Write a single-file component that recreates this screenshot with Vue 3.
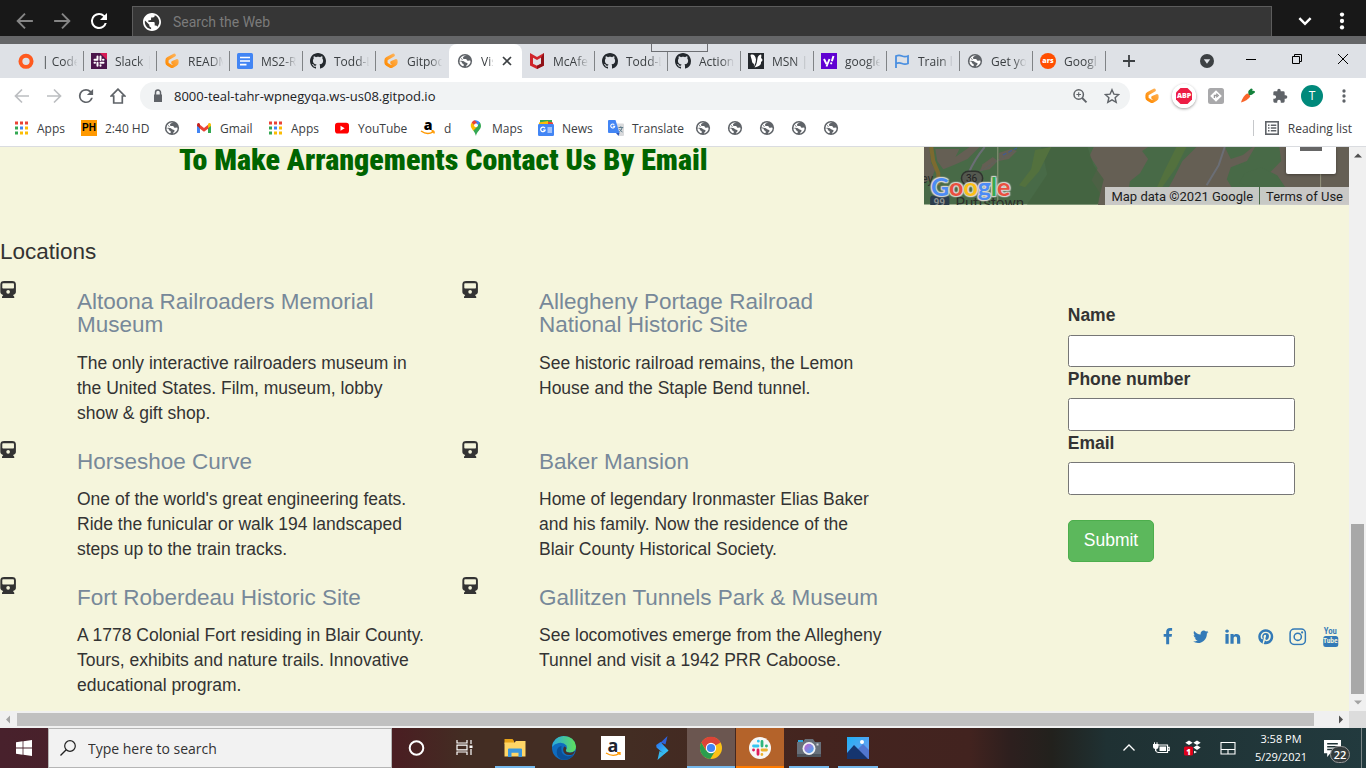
<script setup>
import { h } from 'vue'

const letters = {
  ars: ['ars'],
  ph: ['PH'],
  amazon: ['a'],
  abp: ['ABP'],
  'amazon-tile': ['a'],
  'youtube-old': ['You', 'Tube'],
  dropbox: ['1'],
}

const Glyph = (props) =>
  h('span', { class: ['glyph', 'glyph-' + props.name] }, [
    h('svg', { 'aria-hidden': 'true' }, [h('use', { href: '#' + props.name })]),
    ...(letters[props.name] || []).map((t) => h('b', t)),
  ])
Glyph.props = ['name']

const tabs = [
  { icon: 'codeo', label: '| Code' },
  { icon: 'slack', label: 'Slack |' },
  { icon: 'gitpod', label: 'READM' },
  { icon: 'docs', label: 'MS2-R' },
  { icon: 'github', label: 'Todd-L' },
  { icon: 'gitpod', label: 'Gitpod' },
  { icon: 'globe', label: 'Vis', active: true },
  { icon: 'mcafee', label: 'McAfe' },
  { icon: 'github', label: 'Todd-L' },
  { icon: 'github', label: 'Action' },
  { icon: 'msn', label: 'MSN |' },
  { icon: 'yahoo', label: 'google' },
  { icon: 'flag', label: 'Train lo' },
  { icon: 'globe', label: 'Get yo' },
  { icon: 'ars', label: 'Googl' },
]

const bookmarks = [
  { icon: 'apps', label: 'Apps', width: 68 },
  { icon: 'ph', label: '2:40 HD', width: 83 },
  { icon: 'globe', label: '', width: 32 },
  { icon: 'gmail', label: 'Gmail', width: 71 },
  { icon: 'apps', label: 'Apps', width: 67 },
  { icon: 'youtube', label: 'YouTube', width: 86 },
  { icon: 'amazon', label: 'd', width: 48 },
  { icon: 'maps', label: 'Maps', width: 70 },
  { icon: 'news', label: 'News', width: 70 },
  { icon: 'translate', label: 'Translate', width: 87 },
  { icon: 'globe', label: '', width: 32 },
  { icon: 'globe', label: '', width: 32 },
  { icon: 'globe', label: '', width: 32 },
  { icon: 'globe', label: '', width: 32 },
  { icon: 'globe', label: '', width: 32 },
]

const extensions = ['gitpod', 'abp', 'tag', 'carrot', 'puzzle']

const locations = [
  { name: 'Altoona Railroaders Memorial Museum', text: 'The only interactive railroaders museum in the United States. Film, museum, lobby show & gift shop.' },
  { name: 'Allegheny Portage Railroad National Historic Site', text: 'See historic railroad remains, the Lemon House and the Staple Bend tunnel.' },
  { name: 'Horseshoe Curve', text: "One of the world's great engineering feats. Ride the funicular or walk 194 landscaped steps up to the train tracks." },
  { name: 'Baker Mansion', text: 'Home of legendary Ironmaster Elias Baker and his family. Now the residence of the Blair County Historical Society.' },
  { name: 'Fort Roberdeau Historic Site', text: 'A 1778 Colonial Fort residing in Blair County. Tours, exhibits and nature trails. Innovative educational program.' },
  { name: 'Gallitzen Tunnels Park & Museum', text: 'See locomotives emerge from the Allegheny Tunnel and visit a 1942 PRR Caboose.' },
]

const social = ['facebook', 'twitter', 'linkedin', 'pinterest', 'instagram', 'youtube-old']

const pinned = [
  { icon: 'cortana' },
  { icon: 'taskview' },
  { icon: 'explorer', state: 'open' },
  { icon: 'edge' },
  { icon: 'amazon-tile' },
  { icon: 'stream' },
  { icon: 'chrome', state: 'current' },
  { icon: 'slack-round', state: 'alert' },
  { icon: 'camera', state: 'open' },
  { icon: 'photos', state: 'open' },
]
</script>

<template>
  <svg class="sprite" aria-hidden="true">
    <defs>
      <linearGradient id="g-pod" x1="1" y1="0" x2="0" y2="1"><stop offset="0" stop-color="#ffb45b" /><stop offset="1" stop-color="#ff8a00" /></linearGradient>
      <linearGradient id="g-edge" x1="0" y1="0" x2="1" y2="0"><stop offset="0" stop-color="#2aa8e0" /><stop offset="1" stop-color="#5fe05a" /></linearGradient>
      <linearGradient id="g-stream" x1="0" y1="0" x2="1" y2="1"><stop offset="0" stop-color="#2a6df0" /><stop offset="1" stop-color="#37d6f5" /></linearGradient>
      <linearGradient id="g-photo" x1="0" y1="0" x2="1" y2="1"><stop offset="0" stop-color="#20b0f5" /><stop offset="1" stop-color="#7a9cf0" /></linearGradient>
      <linearGradient id="g-lens" x1="0" y1="0" x2="1" y2="1"><stop offset="0" stop-color="#c75fd0" /><stop offset="1" stop-color="#3fb0f0" /></linearGradient>
    </defs>
    <symbol id="arrow-left" viewBox="0 0 16 16"><path d="M15 8H1.500M8 1.500L1.500 8 8 14.500" fill="none" stroke="currentColor" stroke-width="1.700" /></symbol>
    <symbol id="arrow-right" viewBox="0 0 16 16"><path d="M1 8h13.500M8 1.500L14.500 8 8 14.500" fill="none" stroke="currentColor" stroke-width="1.700" /></symbol>
    <symbol id="reload" viewBox="3 3 18 18"><path fill="currentColor" d="M17.65 6.350A7.960 7.960 0 0 0 12 4a8 8 0 1 0 7.730 10h-2.080A6 6 0 1 1 12 6c1.660 0 3.140.69 4.220 1.780L13 11h7V4z" /></symbol>
    <symbol id="home" viewBox="0 0 16 16"><path d="M8 1.200L1.300 8h2.400v7h8.600V8h2.400z" fill="none" stroke="currentColor" stroke-width="1.700" /></symbol>
    <symbol id="world" viewBox="2 2 20 20"><path fill="currentColor" d="M12 2C6.480 2 2 6.480 2 12s4.480 10 10 10 10-4.480 10-10S17.520 2 12 2zm-1 17.930c-3.950-.49-7-3.850-7-7.930 0-.62.08-1.210.21-1.790L9 15v1c0 1.100.9 2 2 2zm6.900-2.540A2 2 0 0 0 16 16h-1v-3c0-.55-.45-1-1-1H8v-2h2c.55 0 1-.45 1-1V7h2a2 2 0 0 0 2-2v-.41A8 8 0 0 1 17.900 17.390z" /></symbol>
    <symbol id="globe" viewBox="0 0 16 16"><circle cx="8" cy="8" r="7.100" fill="#5f6368" /><g fill="#fff"><path d="M9.600 2.600C8 3 6.300 3.500 6 4.700c-.2 1.100.9 1.500 2 1.300 1-.2 1.700.2 1.800 1 .2 1 1.500.7 2.400.4l1.300.3q.3 1.700-.8 3.400-1.300 1.900-3.400 2.300c-.4-.6.2-1.200.8-1.700.7-.6.6-1.400-.1-1.800-.9-.5-1.800-.2-2.300-.9-.4-.6-.9-1-1.800-1.100C4.700 7.800 3.500 7.500 2.500 7.500 2.200 10 3.300 12 5.300 13c.9.300 1.500 0 1.500-.8 0-.9-.6-1.200-1.300-1.600-.8-.5-1-1.100-.5-1.700l-2.500-1Q2.600 5.300 4.500 3.700 6.700 2 9.600 2.600z" /></g><path d="M4 5.500q1 .2 1.500 1.200M10.700 4.500q1 .8 2.300.8" stroke="#5f6368" fill="none" stroke-width=".8" /></symbol>
    <symbol id="lock" viewBox="0 0 16 16"><path d="M4 6.500h8v7.500H4z" fill="#5f6368" /><path d="M5.500 7V4.500a2.500 2.500 0 0 1 5 0V7" fill="none" stroke="#5f6368" stroke-width="1.500" /></symbol>
    <symbol id="zoomin" viewBox="0 0 16 16"><g fill="none" stroke="#5f6368"><circle cx="6.700" cy="6.500" r="4.700" stroke-width="1.500" /><path d="M10.200 10l4.300 4.300" stroke-width="1.900" /><path d="M6.700 4.200v4.600M4.400 6.500H9" stroke-width="1.100" /></g></symbol>
    <symbol id="star" viewBox="0 0 16 16"><path d="M8 1.700l1.900 4.400 4.800.4-3.600 3.200 1.100 4.700L8 11.900l-4.200 2.500 1.100-4.700L1.300 6.500l4.800-.4z" fill="none" stroke="#5f6368" stroke-width="1.400" /></symbol>
    <symbol id="dots" viewBox="0 0 16 16"><circle cx="8" cy="2.300" r="1.900" fill="currentColor" /><circle cx="8" cy="8" r="1.900" fill="currentColor" /><circle cx="8" cy="13.700" r="1.900" fill="currentColor" /></symbol>
    <symbol id="chev-down" viewBox="0 0 16 16"><path d="M3 5.500l5 5 5-5" fill="none" stroke="currentColor" stroke-width="2.200" /></symbol>
    <symbol id="codeo" viewBox="0 0 16 16"><circle cx="8" cy="8.300" r="5.600" fill="none" stroke="#ff5a1f" stroke-width="3.900" /></symbol>
    <symbol id="slack" viewBox="0 0 16 16"><path fill="#4a154b" d="M0 0h16v16H0z" /><path fill="#d81b55" d="M9 0h7v7z" /><g stroke="#fff" stroke-width="2" stroke-linecap="round"><path d="M6.500 3.500v2M3.500 6.800h3M9.500 3.500v3.500M12 6.800h.5M3.500 9.700h.500M6.500 9.700v3M9.500 9.700h3M9.500 12.300v.4" /></g></symbol>
    <symbol id="gitpod" viewBox="0 0 16 16"><path d="M10.300 2.200L4.200 5.500Q3 6.200 3 7.200v2.600q0 1.100 1 1.600l3 1.700q1 .6 2 0l3-1.700q1-.5 1-1.600V7.700L8.800 9.500" fill="none" stroke="url(#g-pod)" stroke-width="3.200" stroke-linecap="round" stroke-linejoin="round" /></symbol>
    <symbol id="docs" viewBox="0 0 16 16"><rect width="16" height="16" rx="1.500" fill="#4285f4" /><path d="M3 4.500h10M3 8h10M3 11.700h6.500" stroke="#fff" stroke-width="1.700" /></symbol>
    <symbol id="github" viewBox="0 0 16 16"><path fill="#24292e" d="M8 0C3.580 0 0 3.580 0 8c0 3.540 2.290 6.530 5.470 7.590.4.07.55-.17.55-.38 0-.19-.01-.82-.01-1.490-2.010.37-2.530-.49-2.690-.94-.09-.23-.48-.94-.82-1.130-.28-.15-.68-.52-.01-.53.63-.01 1.080.58 1.230.82.72 1.210 1.870.87 2.330.66.07-.52.28-.87.51-1.070-1.780-.2-3.640-.89-3.640-3.950 0-.87.31-1.590.82-2.150-.08-.2-.36-1.020.08-2.120 0 0 .67-.21 2.200.82.64-.18 1.320-.27 2-.27.68 0 1.360.09 2 .27 1.530-1.040 2.200-.82 2.200-.82.44 1.100.16 1.920.08 2.120.51.56.82 1.270.82 2.150 0 3.070-1.870 3.750-3.650 3.950.29.25.54.73.54 1.480 0 1.070-.01 1.930-.01 2.200 0 .21.15.46.55.38A8.013 8.013 0 0 0 16 8c0-4.420-3.580-8-8-8z" /></symbol>
    <symbol id="mcafee" viewBox="0 0 16 16"><path d="M1 0l7 4 7-4v12.500L8 16l-7-3.500zM4 4.800v5.900l4 2 4-2V4.800L8 7z" fill="#d0252b" fill-rule="evenodd" /><path d="M15 0v12.500L8 16v-3.300l4-2V4.800z" fill="#8f1218" /></symbol>
    <symbol id="msn" viewBox="0 0 16 16"><path fill="#24282c" d="M0 0h16v16H0z" /><path d="M2.500 2C5 .8 7.500 2 8 6.500L7.600 9.500 6 13.500c-.3-1 .3-1.700-.2-2.700-1-.5-1.500-1-1.800-2.300C3.800 6 2.700 4.500 2.500 2zM13 1.500c1 1.500-.3 2.500.3 3.700 1.500 1 1.700 2.500-.1 3.500-.5.700.2 1.700-.7 2.700-1.500 2-4 2.500-6 3 1.600-2 2.500-5 2.800-8 .2-2.500 1.500-4.700 3.700-4.900z" fill="#fff" /></symbol>
    <symbol id="yahoo" viewBox="0 0 16 16"><path fill="#6001d2" d="M0 0h16v16H0z" /><path d="M3 6l2.500 5M8.500 6l-3 7.500" stroke="#fff" stroke-width="1.900" /><path d="M12.500 3l-1.700 5.300" stroke="#fff" stroke-width="2" /><circle cx="10.200" cy="10.300" r="1.100" fill="#fff" /></symbol>
    <symbol id="flag" viewBox="0 0 16 16"><path d="M2 15V3q3-1.200 6 0t6 0v7.500q-3 1.200-6 0t-6 0" fill="none" stroke="#4a8fe0" stroke-width="1.800" /></symbol>
    <symbol id="ars" viewBox="0 0 16 16"><circle cx="8" cy="8" r="8" fill="#ff4e00" /></symbol>
    <symbol id="apps" viewBox="0 0 16 16"><path fill="#ea4335" d="M2 1.500h3v3H2zM7 1.500h3v3H7zM12 1.500h3v3h-3z" /><path fill="#34a853" d="M2 6.500h3v3H2zM2 11.500h3v3H2z" /><path fill="#4285f4" d="M7 6.500h3v3H7z" /><path fill="#fbbc04" d="M12 6.500h3v3h-3zM7 11.500h3v3H7zM12 11.500h3v3h-3z" /></symbol>
    <symbol id="ph" viewBox="0 0 16 16"><path fill="#ff9900" d="M0 0h16v16H0z" /></symbol>
    <symbol id="gmail" viewBox="0 0 16 16"><path fill="#4285f4" d="M1 4.500v8.500h3V6.500z" /><path fill="#34a853" d="M12 6.500V13h3V4.500z" /><path fill="#ea4335" d="M3 4l5 4 5-4v4l-5 3.800L3 8z" /><path fill="#c5221f" d="M1 4.500q0-1.800 2-1.500l1 1v4L1 6z" /><path fill="#fbbc04" d="M15 4.500q0-1.800-2-1.500l-1 1v4l3-2z" /></symbol>
    <symbol id="youtube" viewBox="0 0 16 16"><rect x="1" y="2.800" width="14" height="10.700" rx="2.800" fill="#f00" /><path d="M6.500 5.700v5l4.200-2.500z" fill="#fff" /></symbol>
    <symbol id="amazon" viewBox="0 0 16 16"><path d="M1 11q6.500 4.500 12 .8M11.500 10.800q3-.6 2.500 2.700" fill="none" stroke="#ff9900" stroke-width="1.500" /></symbol>
    <symbol id="maps" viewBox="0 0 16 16"><path fill="#34a853" d="M13 6c0 4-4.300 5-5 10-.5-2-1.500-4-3-6l6.500-8Q13 3.500 13 6z" /><path fill="#4285f4" d="M6.500.300Q10-.5 12 2.700L8.300 7z" /><path fill="#ea4335" d="M6.500.300L9 2.500 5.500 6 3.600 2.700Q4.800.8 6.500.300z" /><path fill="#fbbc04" d="M3.600 2.700L6.300 5l2.400 2.300-3.500 3.400Q1.300 6 3.600 2.700z" /><circle cx="8" cy="5.300" r="1.900" fill="#fff" /></symbol>
    <symbol id="news" viewBox="0 0 16 16"><path fill="#34a853" d="M2 0h12v5H2z" /><path fill="#ea4335" d="M9 1.500l6 1V6H9z" /><path fill="#fbbc04" d="M1 2.500L10 1v4H1z" /><rect y="4" width="16" height="12" rx="1.200" fill="#4285f4" /><path d="M7 8.300A2.300 2.300 0 1 0 7.200 10H5M9.500 8h4.500M9.500 10H14M9.500 12H14" fill="none" stroke="#fff" stroke-width="1.200" /></symbol>
    <symbol id="translate" viewBox="0 0 16 16"><path fill="#d9dadc" d="M7 3.500h8a1 1 0 0 1 1 1V15a1 1 0 0 1-1 1h-4z" /><path fill="#4285f4" d="M1 0h6.500l4 13H1a1 1 0 0 1-1-1V1a1 1 0 0 1 1-1z" /><path fill="#2b55b8" d="M8 13h3.500L10.500 16z" /><path d="M6.300 4.700A2 2 0 1 0 6.700 6.300H4.800" fill="none" stroke="#fff" stroke-width="1.100" /><path d="M10.500 7.500h4.700M12.800 6.300v1.200M14.200 7.500q-.7 3-3 4.500M11.500 9q1 2 3 3" fill="none" stroke="#607d8b" stroke-width="1" /></symbol>
    <symbol id="abp" viewBox="0 0 24 24"><circle cx="12" cy="12" r="12" fill="#fff" /><path fill="#ed1e45" d="M8.500 4h7L20 8.500v7L15.500 20h-7L4 15.500v-7z" /></symbol>
    <symbol id="tag" viewBox="0 0 16 16"><rect width="16" height="16" rx="2.500" fill="#a9a9ab" /><path d="M8 2.200L13.800 8 8 13.800 2.200 8z" fill="#fff" /><path d="M6.400 10V7.500H9M8.300 5.600l2 1.900-2 1.900" fill="none" stroke="#9a9a9c" stroke-width="1.300" /></symbol>
    <symbol id="carrot" viewBox="0 0 16 16"><path d="M1 14.500q2-6.500 6-9 3 .3 3.200 3.200-3 4-9.200 5.800z" fill="#f9652b" /><path d="M8.500 6q-1-3.500 1.500-4.500 1-1.500 2.500-.5.500 1.500-.5 2 2-.8 3 .5.200 1.700-1.500 2-1.500 2-4 1.800z" fill="#14823c" /></symbol>
    <symbol id="puzzle" viewBox="0 0 24 24"><path fill="#5f6368" d="M20.500 11H19V7a2 2 0 0 0-2-2h-4V3.500a2.500 2.500 0 0 0-5 0V5H4a2 2 0 0 0-2 2v3.800h1.500a2.700 2.700 0 0 1 0 5.400H2V20a2 2 0 0 0 2 2h3.800v-1.500a2.700 2.700 0 0 1 5.400 0V22H17a2 2 0 0 0 2-2v-4h1.500a2.500 2.500 0 0 0 0-5z" /></symbol>
    <symbol id="reading" viewBox="0 0 16 16"><rect x="1.800" y="1.800" width="12.400" height="12.400" fill="none" stroke="#5f6368" stroke-width="1.600" /><path d="M4 5.200h1.500M4 8h1.500M4 10.800h1.500M6.800 5.200h5.500M6.800 8h5.500M6.800 10.800h5.500" stroke="#5f6368" stroke-width="1.400" /></symbol>
    <symbol id="train" viewBox="0 0 16 18"><path fill="#333" fill-rule="evenodd" d="M4 0h8q4 0 4 3.500v7.500q0 2.700-3 3.300l1.300 1.900V17.500H1.700v-1.300L3 14.300Q0 13.700 0 11V3.500Q0 0 4 0zM2.800 2.300q-.8 0-.8.800V7q0 .7.800.7h10.400q.8 0 .8-.7V3.100q0-.8-.8-.8zM8 9.200a1.900 1.900 0 1 0 0 3.800 1.900 1.900 0 0 0 0-3.800z" /></symbol>
    <symbol id="facebook" viewBox="0 0 1792 1792"><path fill="currentColor" d="M1343 12v264h-157q-86 0-116 36t-30 108v189h293l-39 296h-254v759h-306v-759h-255v-296h255v-218q0-186 104-288.500t277-102.500q147 0 228 12z" /></symbol>
    <symbol id="twitter" viewBox="0 0 1792 1792"><path fill="currentColor" d="M1684 408q-67 98-162 167 1 14 1 42 0 130-38 259.500t-115.500 248.500-184.500 210.500-258 146-323 54.500q-271 0-496-145 35 4 78 4 225 0 401-138-105-2-188-64.500t-114-159.500q33 5 61 5 43 0 85-11-112-23-185.500-111.500t-73.500-205.500v-4q68 38 146 41-66-44-105-115t-39-154q0-88 44-163 121 149 294.500 238.500t371.500 99.500q-8-38-8-74 0-134 94.500-228.500t228.500-94.500q140 0 236 102 109-21 205-78-37 115-142 178 93-10 186-50z" /></symbol>
    <symbol id="linkedin" viewBox="0 0 1792 1792"><path fill="currentColor" d="M477 625v991h-330v-991h330zm21-306q1 73-50.500 122t-135.500 49h-2q-82 0-132-49t-50-122q0-74 51.500-122.500t134.500-48.500 133 48.500 51 122.500zm1166 729v568h-329v-530q0-105-40.500-164.500t-126.500-59.500q-63 0-105.500 34.500t-63.500 85.500q-11 30-11 81v553h-329q2-399 2-647t-1-296l-1-48h329v144h-2q20-32 41-56t56.500-52 87-43.500 114.500-15.500q171 0 275 113.500t104 332.500z" /></symbol>
    <symbol id="pinterest" viewBox="0 0 1792 1792"><path fill="currentColor" d="M1664 896q0 209-103 385.500t-279.500 279.500-385.500 103q-111 0-218-32 59-93 78-164 9-34 54-211 20 39 73 67.500t114 28.500q121 0 216-68.500t147-188.500 52-270q0-114-59.500-214t-172.500-163-255-63q-105 0-196 29t-154.500 77-109 110.500-67 129.500-21.500 134q0 104 40 183t117 111q30 12 38-20 2-7 8-31t8-30q6-23-11-43-51-61-51-151 0-151 104.500-259.500t273.500-108.500q151 0 235.500 82t84.500 213q0 170-68.500 289t-175.500 119q-61 0-98-43.500t-23-104.500q8-35 26.500-93.500t30-103 11.500-75.500q0-50-27-83t-77-33q-62 0-105 57t-43 142q0 73 25 122l-99 418q-17 70-13 177-206-91-333-281t-127-423q0-209 103-385.500t279.500-279.500 385.500-103 385.500 103 279.500 279.500 103 385.500z" /></symbol>
    <symbol id="instagram" viewBox="0 0 16 16"><g fill="none" stroke="currentColor" stroke-width="1.400"><rect x="1" y="1" width="14" height="14" rx="3.800" /><circle cx="8" cy="8" r="3.300" /></g><circle cx="12" cy="4" r="1" fill="currentColor" /></symbol>
    <symbol id="youtube-old" viewBox="0 0 16 20"><rect x=".5" y="9" width="15" height="11" rx="2.500" fill="currentColor" /></symbol>
    <symbol id="windows" viewBox="0 0 16 16"><path fill="#fff" d="M0 2.200l6.600-.9v6.300H0zM7.400 1.200L16 0v7.600H7.400zM0 8.400h6.600v6.300L0 13.800zM7.400 8.400H16V16l-8.600-1.200z" /></symbol>
    <symbol id="search" viewBox="0 0 16 16"><circle cx="10" cy="6" r="5.300" fill="none" stroke="#222" stroke-width="1.200" /><path d="M6.200 9.800L.5 15.500" stroke="#222" stroke-width="1.300" /></symbol>
    <symbol id="cortana" viewBox="0 0 24 24"><circle cx="11.500" cy="12" r="6.800" fill="none" stroke="#fff" stroke-width="2" /></symbol>
    <symbol id="taskview" viewBox="0 0 24 24"><g fill="none" stroke="#fff" stroke-width="1.200"><path d="M3 4v3h10V4M3 19v-3h10v3M3 9.200h10v4.600H3zM17 4v4M17 13v6" /></g><path fill="#fff" d="M15.500 9.500h3v2.500h-3z" /></symbol>
    <symbol id="explorer" viewBox="0 0 24 24"><path fill="#e8a317" d="M1.500 3h8l1.500 2v3h-9.500z" /><path fill="#ffd666" d="M1.500 6.500h10l1.500-1.500h9.500v15.500h-21z" /><path fill="#3b97dd" d="M5 13.500q0-1 1-1h12q1 0 1 1v7.500h-3.500v-4.200h-7V21H5z" /></symbol>
    <symbol id="edge" viewBox="0 0 24 24"><circle cx="12" cy="12" r="12" fill="#0f6cbf" /><path fill="url(#g-edge)" d="M0 11Q1 1 11.500 0 22.500 0 24 10.500q0 5.500-6 6-4.500 0-4-2.500 1.500-2 .5-4.500Q11.500 6 6.500 7 2 8 0 11z" /><path fill="#0b4f97" d="M9.500 10q-1.500 9 6 10.200 3.500.3 6-1.700-3.500 6-10.500 5.300Q3.500 22 5 14q1-3.500 4.500-4z" /><path fill="#45312a" d="M12.200 10.600q3 .7 1.700 3.500-.5 2 3 2.500 3.500.3 6-1.500-.7 2.300-2.200 3.300-5 1.800-8-1-2.800-3-.5-6.800z" /></symbol>
    <symbol id="amazon-tile" viewBox="0 0 24 24"><path fill="#fff" d="M0 0h24v24H0z" /><path d="M5 17q7 4.500 13.500.4M16 16.700h3v2.300" fill="none" stroke="#ff9900" stroke-width="1.300" /></symbol>
    <symbol id="stream" viewBox="0 0 24 24"><path fill="#2f62d8" d="M17.500 0l-2 8.500-3.500-1.500-5.500 3.500z" /><path fill="url(#g-stream)" d="M6.200 9l4.300-3 8 8.500-4.500 3.500-7.500-6.500z" /><path fill="#36b8ee" d="M18.500 14.500L7.500 24l2-9 3 1.500z" /></symbol>
    <symbol id="chrome" viewBox="0 0 24 24"><circle cx="12" cy="12" r="11" fill="#fbc116" /><path fill="#db4437" d="M12 12L2.400 6.500a11 11 0 0 1 19.200 0z" /><path fill="#2a9d4e" d="M12 12L7 14.500 2.400 6.500A11 11 0 0 0 11.300 23l5-8.300z" /><path fill="#db4437" d="M2.400 6.500L7 14l2-7h12.900z" /><circle cx="12" cy="12" r="5.200" fill="#fff" /><circle cx="12" cy="12" r="4.100" fill="#4285f4" /></symbol>
    <symbol id="slack-round" viewBox="0 0 24 24"><circle cx="12" cy="12" r="11" fill="#f7f7f7" /><g fill="none" stroke-width="2.800" stroke-linecap="round"><path stroke="#36c5f0" d="M10.300 5.200h.100M5.500 10h4.500" /><path stroke="#2eb67d" d="M14 5.500V10M18.500 10h-.100" /><path stroke="#ecb22e" d="M14 14h4.500M13.900 18.500v.1" /><path stroke="#e01e5a" d="M5.500 14h.100M10 14v4.300" /></g></symbol>
    <symbol id="camera" viewBox="0 0 24 24"><path fill="#29a5dd" d="M1 4h5v3H1z" /><path fill="#68707a" d="M0 6h6l2-3h8l2 3h6v14.500H0z" /><path fill="#4d545d" d="M0 18h24v3H0z" /><circle cx="12" cy="12.500" r="6.500" fill="#f1f1f4" /><circle cx="12" cy="12.500" r="4.700" fill="url(#g-lens)" /><path fill="#cfd3d8" d="M19.500 7.500h2v2h-2z" /></symbol>
    <symbol id="photos" viewBox="0 0 24 24"><path fill="url(#g-photo)" d="M1 1h22v22H1z" /><path fill="#5277cf" d="M11 14l6-6 6 6v9H11z" /><path fill="#15356f" d="M1 17l7-8 14 14H1z" /><circle cx="16" cy="6" r="2" fill="#fff" /></symbol>
    <symbol id="chev-up" viewBox="0 0 16 16"><path d="M2.500 10.500L8 5l5.500 5.500" fill="none" stroke="#fff" stroke-width="1.300" /></symbol>
    <symbol id="battery" viewBox="0 0 18 16"><path d="M6 5h9.500v7.500H6M15.500 7.300h1.700v3h-1.700" fill="none" stroke="#fff" stroke-width="1.200" /><path fill="#fff" d="M7.500 6.500h6.500V11H7.500zM1 4h5.500v3q0 1.800-2.100 2V11H3V9Q1 8.700 1 7z" /><path d="M2.500 2.300v2M5 2.300v2M3.700 10.500q0 2 3 2" stroke="#fff" fill="none" stroke-width="1" /></symbol>
    <symbol id="dropbox" viewBox="0 0 18 16"><path fill="#fff" d="M5 .5l3.700 2.300L5 5.100 1.300 2.800zM13 .5l3.700 2.300L13 5.100 9.300 2.800zM13 5.300l3.700 2.300L13 10 9.300 7.600zM10 10.700l3 1.300-3 1.500z" /><rect y="6.500" width="9" height="9" rx="1.500" fill="#e0001b" /></symbol>
    <symbol id="touchpad" viewBox="0 0 16 16"><path d="M1 2.500h14v11.500H1zM1 9.500h14M8 9.500V14" fill="none" stroke="#fff" stroke-width="1.100" /></symbol>
    <symbol id="note" viewBox="0 0 16 16"><path fill="#fff" d="M0 0h16v12.500H6L3 16v-3.500H0z" /><path d="M3 3.500h10M3 6.300h10M3 9h6" stroke="#1f3235" stroke-width="1.300" /></symbol>
  </svg>

  <div class="screen">
    <header class="launcher">
      <button class="lbtn dim" aria-label="Back"><svg><use href="#arrow-left" /></svg></button>
      <button class="lbtn dim" aria-label="Forward"><svg><use href="#arrow-right" /></svg></button>
      <button class="lbtn" aria-label="Reload"><svg><use href="#reload" /></svg></button>
      <label class="websearch">
        <svg><use href="#world" /></svg>
        <input type="text" placeholder="Search the Web" aria-label="Search the Web" />
      </label>
      <button class="lbtn chev" aria-label="Expand"><svg><use href="#chev-down" /></svg></button>
      <button class="lbtn" aria-label="Menu"><svg><use href="#dots" /></svg></button>
    </header>

    <nav class="tabstrip" aria-label="Tabs">
      <div v-for="(t, i) in tabs" :key="i" class="tab" :class="{ active: t.active, before: i === 5 }">
        <Glyph :name="t.icon" />
        <span class="tab-title">{{ t.label }}</span>
        <button v-if="t.active" class="tab-close" aria-label="Close tab"><svg viewBox="0 0 10 10"><path d="M1 1l8 8M9 1L1 9" stroke="#3c4043" stroke-width="1.700" /></svg></button>
      </div>
      <button class="newtab" aria-label="New tab"><svg viewBox="0 0 12 12"><path d="M6 0v12M0 6h12" stroke="#3c4043" stroke-width="1.800" /></svg></button>
      <div class="winctl">
        <button aria-label="Account"><svg class="acct" viewBox="0 0 14 14"><circle cx="7" cy="7" r="7" fill="#3c4043" /><path d="M3.800 5.200h6.400L7 9.700z" fill="#dee1e6" /></svg></button>
        <button aria-label="Minimize"><svg viewBox="0 0 10 10"><path d="M0 5.500h10" stroke="#000" /></svg></button>
        <button aria-label="Restore"><svg viewBox="0 0 10 10"><path d="M.5 2.500h7v7h-7zM2.500 2.500v-2h7v7h-2" fill="none" stroke="#000" /></svg></button>
        <button aria-label="Close"><svg viewBox="0 0 10 10"><path d="M0 0l10 10M10 0L0 10" stroke="#000" /></svg></button>
      </div>
      <span class="handle"></span>
    </nav>

    <div class="toolbar">
      <button class="tbtn pale" aria-label="Back"><svg><use href="#arrow-left" /></svg></button>
      <button class="tbtn pale" aria-label="Forward"><svg><use href="#arrow-right" /></svg></button>
      <button class="tbtn" aria-label="Reload"><svg><use href="#reload" /></svg></button>
      <button class="tbtn" aria-label="Home"><svg><use href="#home" /></svg></button>
      <label class="omnibox">
        <svg class="ic"><use href="#lock" /></svg>
        <input type="text" value="8000-teal-tahr-wpnegyqa.ws-us08.gitpod.io" aria-label="Address" />
        <svg class="ic"><use href="#zoomin" /></svg>
        <svg class="ic"><use href="#star" /></svg>
      </label>
      <button v-for="e in extensions" :key="e" class="tbtn" :aria-label="e"><Glyph :name="e" /></button>
      <button class="tbtn" aria-label="Profile"><span class="avatar">T</span></button>
      <button class="tbtn menu" aria-label="Menu"><svg><use href="#dots" /></svg></button>
    </div>

    <nav class="bookmarks" aria-label="Bookmarks">
      <a v-for="(b, i) in bookmarks" :key="i" href="#" class="bm" :style="{ flexBasis: b.width + 'px' }">
        <Glyph :name="b.icon" /><span v-if="b.label">{{ b.label }}</span>
      </a>
      <a href="#" class="reading"><svg class="ic"><use href="#reading" /></svg><span>Reading list</span></a>
    </nav>

    <div class="viewport">
      <main class="page">
        <div class="top cols">
          <h2>To Make Arrangements Contact Us By Email</h2>
          <div class="map">
            <svg class="mapart" viewBox="0 0 425 57" preserveAspectRatio="xMidYMid slice">
              <path fill="#486a47" d="M0 0h425v57H0z" />
              <g fill="#655f54">
                <path d="M0 0h7l2 16 4 6-4 10-9 4z" /><path d="M13 2h24l-4 8 14-10h10l-12 12-14 6-10 4-6-8z" /><path d="M60 17l10-7 5 4-8 8-10 2z" /><path d="M76 6l12-4 6 2-8 8-10 2z" />
                <path d="M170 0h54l-6 4 6 8-8 14-10 8-4 25h-28l2-14-8-12 6-12-8-12z" /><path d="M258 14l14-14h58l-8 14-16 6-4 12 6 10-22 8-24 2h-24l12-22z" /><path d="M346 24l10-10-2-14h71v57h-60l-16-20-14-5z" />
              </g>
              <path fill="#486a47" d="M320 26l16-6 16 8 8 12-22 2-24-6zM300 0h28l-10 8-12 4z" />
              <path fill="#43623f" d="M118 0h46l6 18 10 14-6 25h-70l20-30z" opacity=".7" />
              <g fill="#53713e"><path d="M112 3l16-3-12 24-14 16-6-2 12-16z" /><path d="M252 0h10l-10 20-14 20-8 6 10-22z" /></g>
              <path d="M9 0l2 14 5 12v12" fill="none" stroke="#7c6a30" stroke-width="4" />
              <path d="M62 0Q52 12 46 26M300 0l-6 18-12 20" fill="none" stroke="#6b6e75" stroke-width="2" />
              <path d="M92 4L70 16 58 24" fill="none" stroke="#5c635e" stroke-dasharray="3 1" />
              <path d="M80 8l14-7" stroke="#3d5b9a" stroke-dasharray="4 2" />
              <path d="M75 0v57M395 0v57" stroke="#aaa98f" opacity=".7" />
              <rect x="39" y="24" width="21" height="14" rx="7" fill="#555950" stroke="#2f332e" stroke-width="1.500" />
              <rect x="8" y="48" width="19" height="12" rx="3" fill="#2c3c4c" />
              <g font-size="10">
                <text x="49" y="35" text-anchor="middle" fill="#222">36</text>
                <text x="-1" y="36" font-size="12" fill="#2d302b">ey</text>
                <text x="17" y="58" text-anchor="middle" font-weight="700" fill="#8a8f90">99</text>
                <text x="33" y="60" font-size="15" fill="#2d302b">Puttstown</text>
              </g>
            </svg>
            <a href="#" class="glogo" aria-label="Google"><span class="b">G</span><span class="r">o</span><span class="y">o</span><span class="b">g</span><span class="g">l</span><span class="r">e</span></a>
            <button class="zoomout" aria-label="Zoom out"><span></span></button>
            <div class="attrib"><span>Map data ©2021 Google</span><a href="#">Terms of Use</a></div>
          </div>
        </div>

        <h3>Locations</h3>
        <div class="cols">
          <section class="locations">
            <article v-for="l in locations" :key="l.name">
              <svg class="train"><use href="#train" /></svg>
              <div class="info">
                <h4>{{ l.name }}</h4>
                <p>{{ l.text }}</p>
              </div>
            </article>
          </section>
          <aside>
            <form @submit.prevent>
              <label for="f-name">Name</label>
              <input id="f-name" type="text" />
              <label for="f-phone">Phone number</label>
              <input id="f-phone" type="text" />
              <label for="f-email">Email</label>
              <input id="f-email" type="email" />
              <button type="submit">Submit</button>
            </form>
            <div class="social">
              <a v-for="s in social" :key="s" href="#" :aria-label="s"><Glyph :name="s" /></a>
            </div>
          </aside>
        </div>
      </main>
      <div class="vbar">
        <svg viewBox="0 0 17 17"><path d="M5 10.500h8L9 6.500z" fill="#505050" /></svg>
        <div class="vtrack"><div class="vthumb"></div></div>
        <svg viewBox="0 0 17 17"><path d="M5 6.500h8l-4 4z" fill="#a3a3a3" /></svg>
      </div>
    </div>
    <div class="hbar">
      <svg viewBox="0 0 17 17"><path d="M10 4.500v8L6 8.500z" fill="#a3a3a3" /></svg>
      <div class="htrack"><div class="hthumb"></div></div>
      <svg viewBox="0 0 17 17"><path d="M7 4.500v8l4-4z" fill="#505050" /></svg>
      <div class="corner"></div>
    </div>

    <footer class="taskbar">
      <button class="start" aria-label="Start"><svg class="ic"><use href="#windows" /></svg></button>
      <label class="tsearch">
        <svg class="ic"><use href="#search" /></svg>
        <input type="text" placeholder="Type here to search" aria-label="Type here to search" />
      </label>
      <div class="pins">
        <button v-for="p in pinned" :key="p.icon" class="pin" :class="p.state" :aria-label="p.icon"><Glyph :name="p.icon" /></button>
      </div>
      <div class="tray">
        <button aria-label="Hidden icons"><svg class="ic"><use href="#chev-up" /></svg></button>
        <button aria-label="Battery"><svg class="ic wide"><use href="#battery" /></svg></button>
        <button aria-label="Dropbox"><Glyph name="dropbox" /></button>
        <button class="pad" aria-label="Touchpad"><svg class="ic"><use href="#touchpad" /></svg></button>
        <div class="clock"><span>3:58 PM</span><span>5/29/2021</span></div>
        <button class="notes" aria-label="Notifications"><svg class="ic"><use href="#note" /></svg><span class="badge">22</span></button>
        <span class="peek"></span>
      </div>
    </footer>
  </div>
</template>

<style>
body { margin: 0; background: #f5f5dc; }
.glyph { position: relative; flex: none; display: block; width: 16px; height: 16px; }
.glyph svg { display: block; width: 100%; height: 100%; }
.glyph b { position: absolute; left: 0; right: 0; top: 0; text-align: center; line-height: 16px; color: #fff; font-family: "Open Sans", sans-serif; font-weight: 800; }
.glyph-ars b { font-size: 7px; line-height: 15px; }
.glyph-ph b { font-family: "Liberation Sans", sans-serif; font-size: 10px; color: #000; }
.glyph-amazon b { font-size: 14px; line-height: 10px; color: #000; }
.glyph-abp { width: 24px; height: 24px; border-radius: 50%; box-shadow: 0 1px 3px #999; }
.glyph-abp b { font-size: 7px; line-height: 24px; }
.pins .glyph { width: 24px; height: 24px; }
.glyph-amazon-tile b { font-size: 18px; line-height: 19px; font-weight: 700; color: #1d2530; }
.glyph-dropbox { width: 18px; }
.glyph-dropbox b { font-size: 8px; line-height: 9px; top: 7px; right: 9px; }
.social .glyph { width: 14px; height: 14px; }
.social .glyph-youtube-old { height: 16px; }
.glyph-youtube-old b { font-family: "Roboto Condensed", Roboto, sans-serif; font-weight: 600; font-size: 7px; line-height: 7px; color: #337ab7; }
.glyph-youtube-old b + b { top: 8px; font-size: 6px; color: #f5f5dc; }
</style>

<style scoped>
* { box-sizing: border-box; }
button { border: 0; padding: 0; background: none; font: inherit; color: inherit; display: flex; align-items: center; justify-content: center; }
input { font: inherit; color: inherit; min-width: 0; }
a { text-decoration: none; color: inherit; }
svg { display: block; flex: none; }
.sprite { position: absolute; width: 0; height: 0; }
.ic { width: 16px; height: 16px; }
.ic.wide { width: 18px; }

.screen { display: flex; flex-direction: column; height: 100vh; overflow: hidden; font-family: "Segoe UI", "Open Sans", sans-serif; font-size: 12px; color: #3c4043; }

.launcher { flex: none; height: 44px; display: flex; align-items: center; padding: 6px 6px 0 6px; background: #181818; border-bottom: 8px solid #656668; color: #fff; }
.lbtn { width: 37px; height: 30px; }
.lbtn svg { width: 18px; height: 18px; }
.lbtn.dim { color: #858585; }
.lbtn.chev { margin-left: 14px; }
.websearch { flex: 1; align-self: stretch; margin-left: 15px; display: flex; align-items: center; gap: 12px; padding-left: 10px; background: #363636; border: 1px solid #5c5c5c; border-bottom: 0; }
.websearch svg { width: 18px; height: 18px; }
.websearch input { flex: 1; border: 0; padding: 0; background: none; font-family: Roboto, sans-serif; font-size: 14px; }
.websearch input::placeholder { color: #7b7b7b; opacity: 1; }

.tabstrip { position: relative; flex: none; height: 34px; display: flex; background: #dee1e6; padding-left: 11px; }
.tab { flex: 0 1 73px; min-width: 0; display: flex; align-items: center; gap: 8px; padding: 0 5px 0 7px; position: relative; }
.tab::after { content: ""; position: absolute; right: 0; top: 7px; height: 20px; width: 1px; background: #808386; }
.tab.active { background: #fff; border-radius: 8px 8px 0 0; padding-left: 8px; padding-right: 10px; }
.tab.active::after, .tab.before::after { display: none; }
.tab-title { flex: 1; overflow: hidden; white-space: nowrap; mask-image: linear-gradient(90deg, #000 60%, transparent 96%); }
.tab-close { width: 10px; height: 10px; flex: none; }
.tab-close svg { width: 10px; height: 10px; }
.newtab { width: 46px; }
.newtab svg { width: 12px; height: 12px; }
.winctl { margin-left: auto; display: flex; padding-bottom: 5px; }
.winctl button { width: 46px; }
.winctl svg { width: 10px; height: 10px; }
.winctl .acct { width: 14px; height: 14px; }
.winctl button:first-child { padding-top: 5px; width: 42px; }
.handle { position: absolute; left: 651px; top: 0; width: 57px; height: 8px; border: 1px solid #6d6f73; border-top: 0; background: #dee1e6; }

.toolbar { flex: none; height: 36px; display: flex; align-items: center; padding: 0 6px; background: #fff; color: #5f6368; }
.tbtn { width: 32px; height: 32px; }
.tbtn > svg { width: 16px; height: 16px; }
.tbtn.pale { color: #bcbec1; }
.tbtn.menu > svg { width: 14px; height: 14px; }
.avatar { width: 22px; height: 22px; border-radius: 50%; background: #00897b; color: #fff; font-size: 12px; line-height: 22px; text-align: center; }
.omnibox { flex: 1; height: 28px; margin: 0 6px; display: flex; align-items: center; gap: 8px; padding: 0 10px; border-radius: 14px; background: #f1f3f4; color: #202124; }
.omnibox input { flex: 1; border: 0; padding: 0; background: none; font-size: 13px; }
.omnibox .ic + .ic { margin-left: 8px; }

.bookmarks { flex: none; height: 33px; display: flex; align-items: center; padding: 0 14px 4px 13px; background: #fff; border-bottom: 1px solid #dadce0; }
.bm { flex: 0 1 auto; min-width: 0; display: flex; gap: 8px; align-items: center; white-space: nowrap; }
.reading { margin-left: auto; display: flex; gap: 8px; align-items: center; padding-left: 10px; height: 16px; border-left: 1px solid #c6c8cb; white-space: nowrap; }

.viewport { flex: 1; min-height: 0; display: flex; background: #f5f5dc; }
.page { flex: 1; min-width: 0; overflow: hidden; zoom: 1.25; font-family: "Liberation Sans", Arial, sans-serif; font-size: 14px; line-height: 20px; color: #333; }
.cols { display: grid; grid-template-columns: 924fr 425fr; }
.top { height: 46px; }
h2 { margin: 0; padding-right: 30px; text-align: center; font-family: Impact, "Roboto Condensed", Roboto, sans-serif; font-size: 24px; font-weight: 900; line-height: 20px; white-space: nowrap; color: #006400; }
h3 { margin: 28px 0 10px; font-size: 18px; font-weight: 400; line-height: 19px; }
.locations { display: grid; grid-template-columns: 1fr 1fr; align-content: start; }
article { display: grid; grid-template-columns: 1fr 5fr; }
.train { width: 13px; height: 14px; margin-top: 4px; }
.info { padding: 11px 30px 0 0; }
h4 { margin: 0 0 11px; font-size: 18px; font-weight: 400; line-height: 19px; color: #778899; }
p { margin: 0 0 8px; }
aside { padding: 22px 8px 0 115px; }
form label { display: block; font-weight: 700; margin-bottom: 5px; }
form input { display: block; width: 100%; max-width: 182px; height: 26px; padding: 1px 2px; border: 1px solid #767676; border-radius: 2px; background: #fff; }
form button { margin-top: 20px; height: 34px; padding: 0 12px; border: 1px solid #4cae4c; border-radius: 4px; background: #5cb85c; color: #fff; }
.social { display: flex; align-items: center; justify-content: flex-end; gap: 12px; margin-top: 52px; color: #337ab7; }

.map { position: relative; overflow: hidden; zoom: 0.8; font-family: Roboto, sans-serif; line-height: 16px; }
.mapart { position: absolute; inset: 0; width: 100%; height: 100%; }
.glogo { position: absolute; left: 7px; bottom: 4px; font-family: "Product Sans", Lato, sans-serif; font-size: 25px; font-weight: 700; line-height: 30px; text-shadow: 0 0 2px #d5d5d0, 1px 1px 1px #d5d5d0, -1px -1px 1px #d5d5d0, 1px -1px 1px #d5d5d0, -1px 1px 1px #d5d5d0; }
.b { color: #4c8bf5; }
.r { color: #ea4f3f; }
.y { color: #fbbf16; }
.g { color: #35a853; }
.zoomout { position: absolute; right: 13px; top: 0; width: 50px; height: 27px; background: #fff; border-radius: 0 0 2px 2px; align-items: flex-start; box-shadow: 0 1px 3px #0005; }
.zoomout span { width: 22px; height: 4px; background: #666; }
.attrib { position: absolute; right: 0; bottom: 0; display: flex; gap: 1px; height: 18px; font-size: 13px; line-height: 19px; color: #1c1c1c; white-space: nowrap; }
.attrib > * { background: #d0d0cfee; padding: 0 6px; }

.vbar { width: 17px; display: flex; flex-direction: column; background: #f0f0f0; }
.vbar svg, .hbar svg { width: 17px; height: 17px; }
.vtrack { flex: 1; display: flex; flex-direction: column; justify-content: flex-end; padding: 0 2px; }
.vthumb { height: 32%; background: #a8a8a8; }
.hbar { flex: none; height: 17px; display: flex; background: #f0f0f0; }
.htrack { flex: 1; padding: 2px 0; }
.hthumb { width: 98.6%; height: 13px; background: #c0c0c0; }
.corner { width: 17px; background: #dcdcdc; }

.taskbar { flex: none; height: 40px; display: flex; background: linear-gradient(90deg, #48212c 0%, #4a1e22 29%, #432d23 34%, #432d23 46%, #44241f 60%, #42231f 71%, #2d1f1e 74%, #22211d 77%, #1f3133 81%, #223a3e 100%); color: #fff; }
.start { width: 48px; }
.tsearch { flex: 0 1 344px; display: flex; align-items: center; gap: 12px; padding-left: 11px; background: #f2f2f2; border: 1px solid #b5b5b5; }
.tsearch input { flex: 1; border: 0; padding: 0; background: none; font-size: 14px; }
.tsearch input::placeholder { color: #333; opacity: 1; }
.pins { display: flex; gap: 1px; padding-left: 1px; }
.pin { width: 48px; position: relative; }
.pin.open::after { content: ""; position: absolute; left: 4px; right: 4px; bottom: 0; height: 2px; background: #76b9ed; }
.pin.current { background: #6b5650; border-bottom: 2px solid #76b9ed; padding-top: 2px; }
.pin.alert { background: #b4632a; border-bottom: 2px solid #ff7b00; padding-top: 2px; }
.tray { margin-left: auto; display: flex; align-items: stretch; }
.tray button { width: 32px; }
.tray .pad { width: 38px; }
.clock { width: 68px; display: flex; flex-direction: column; align-items: center; justify-content: center; font-size: 11px; line-height: 18px; white-space: nowrap; }
.tray .notes { width: 46px; position: relative; padding-right: 12px; }
.notes .ic { width: 17px; height: 17px; }
.badge { position: absolute; left: 15px; top: 18px; min-width: 20px; height: 17px; border: 1px solid #999; border-radius: 9px; background: #333b3d; font-size: 11px; font-weight: 600; line-height: 15px; text-align: center; }
.peek { width: 5px; border-left: 1px solid #7b8587; }
</style>
